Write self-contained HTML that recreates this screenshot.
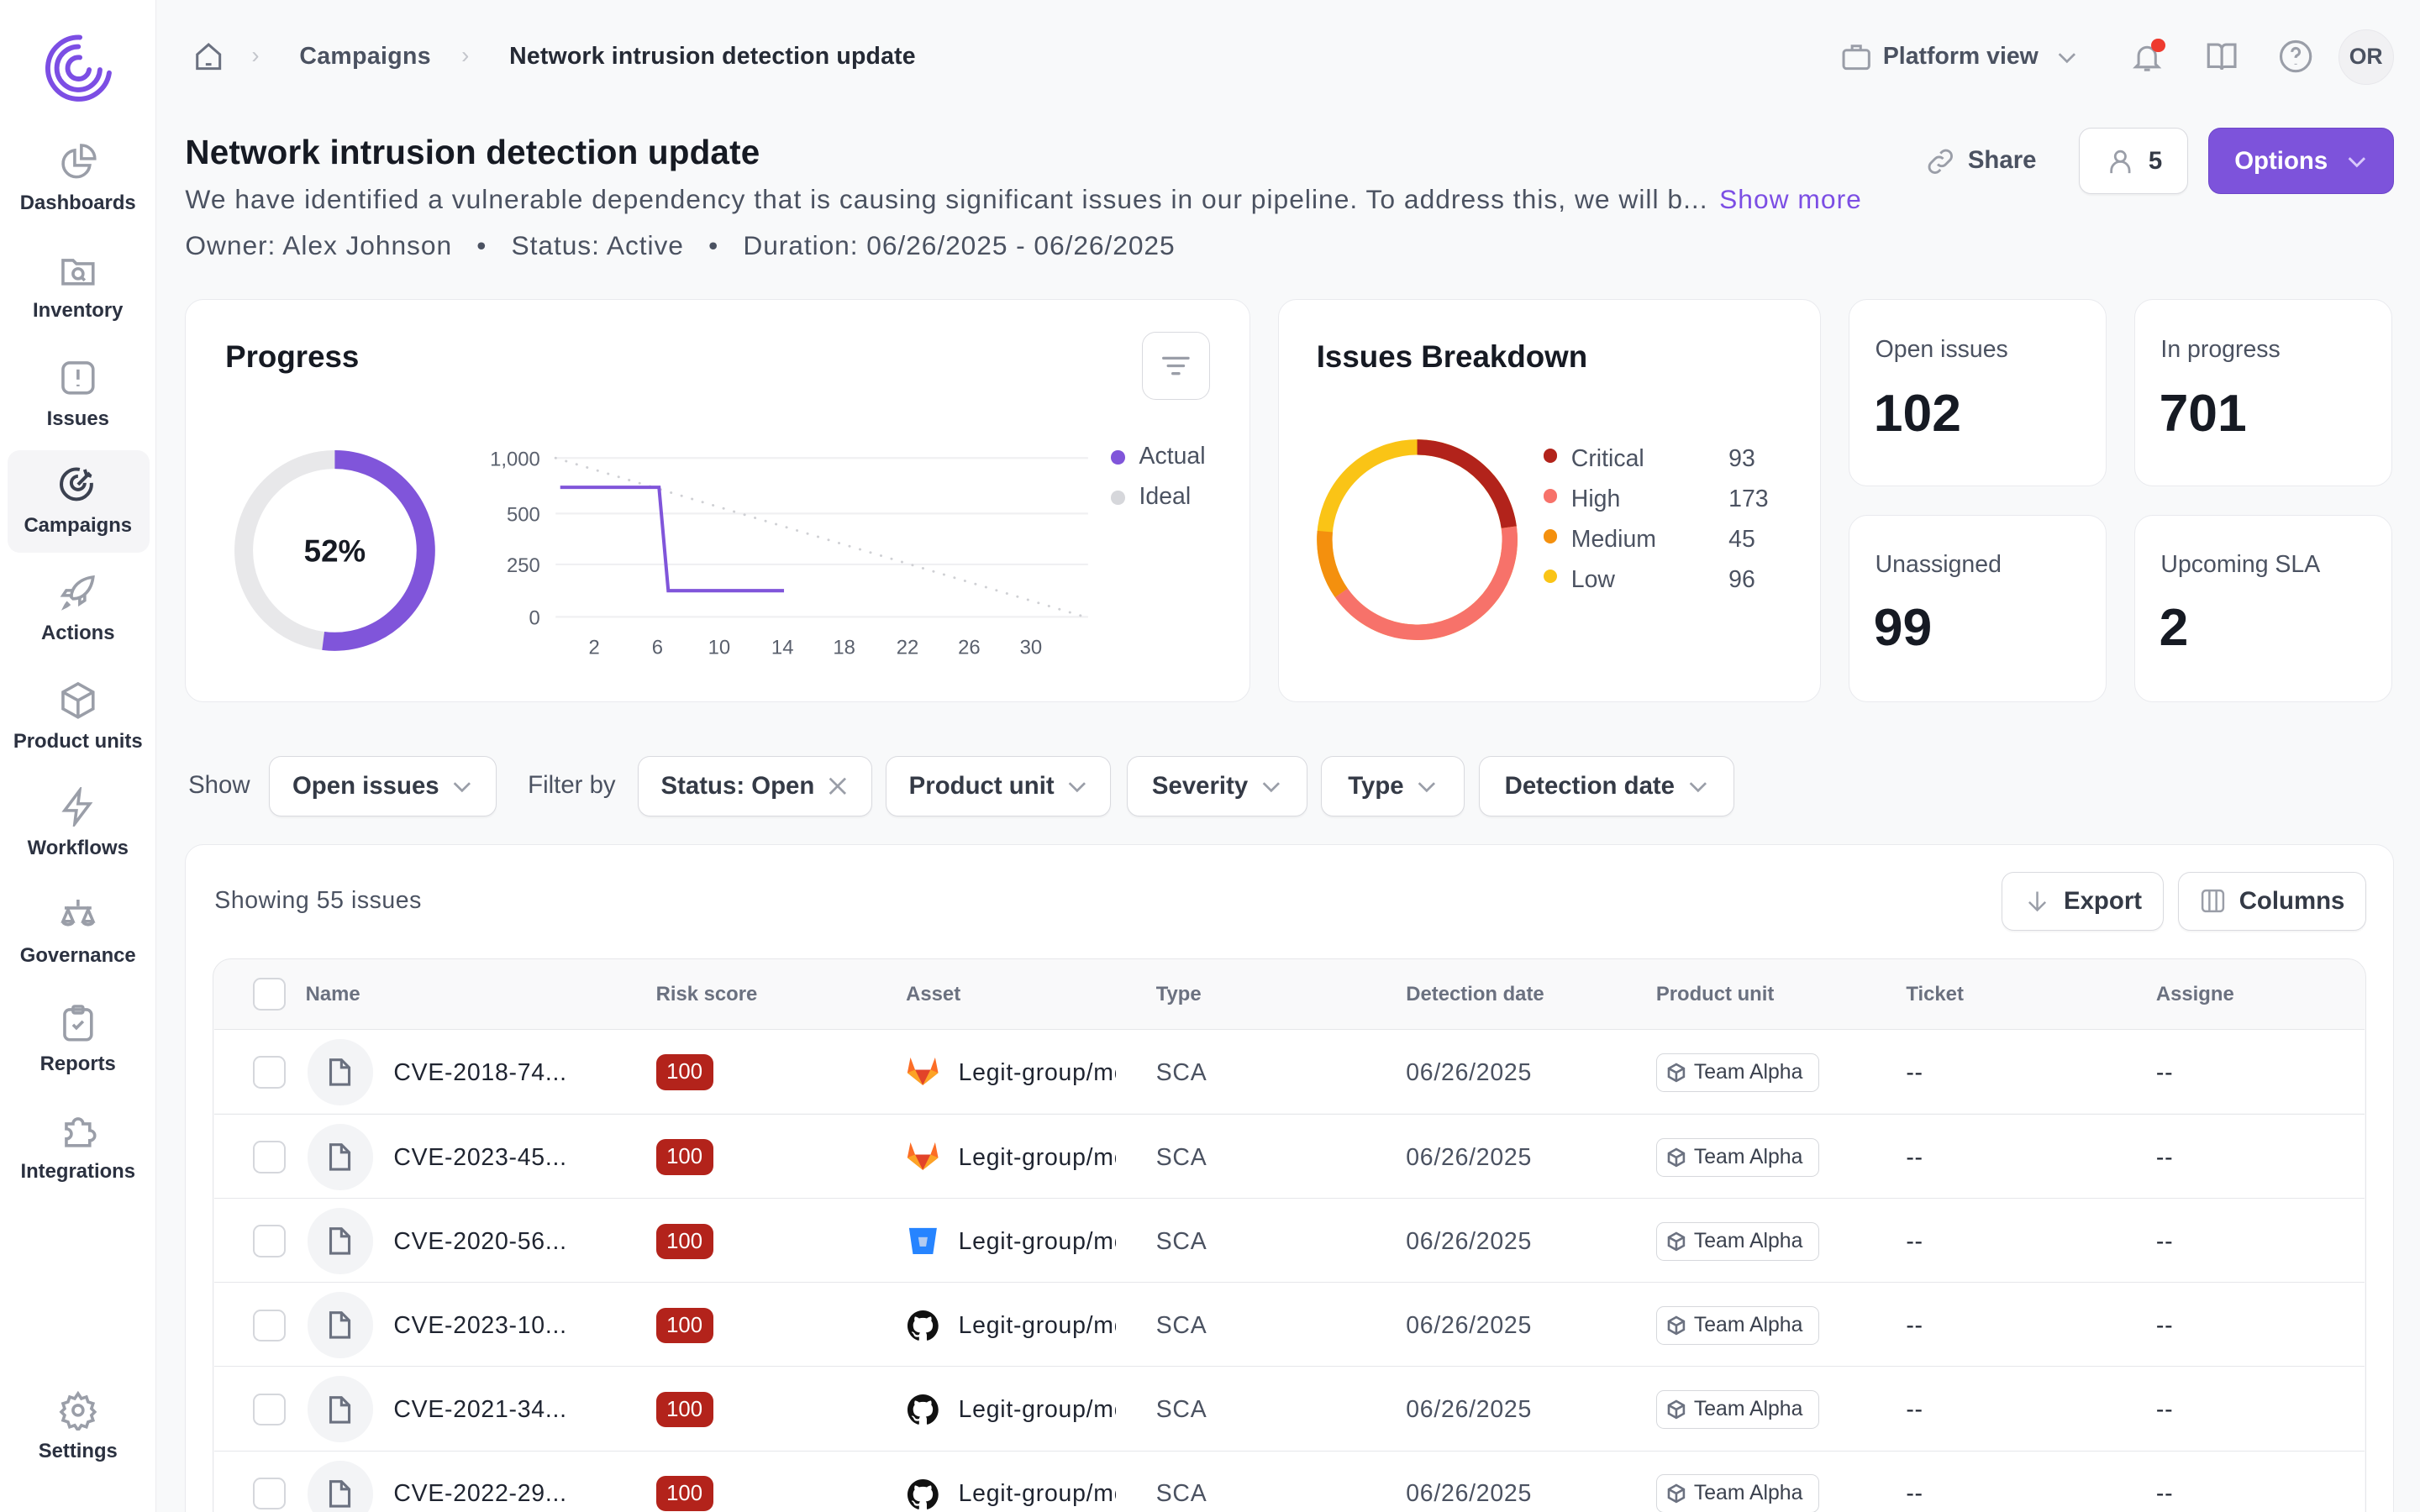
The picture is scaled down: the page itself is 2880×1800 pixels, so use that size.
<!DOCTYPE html>
<html><head><meta charset="utf-8">
<style>
*{box-sizing:border-box;margin:0;padding:0}
html,body{width:2880px;height:1800px;overflow:hidden;background:#f8f9fa}
#w{position:absolute;left:0;top:0;width:1568px;height:980px;zoom:1.836735;font-family:"Liberation Sans",sans-serif;color:#1f2430;background:#f8f9fa;overflow:hidden}
.a{position:absolute}
.side{left:0;top:0;width:101px;height:980px;background:#fff;border-right:1px solid #ececef}
.nav{position:absolute;left:0;width:101px;text-align:center;font-size:13px;font-weight:600;color:#2b3140}
.nav svg{display:block;margin:0 auto 6px}
.card{position:absolute;background:#fff;border:1px solid #e9eaee;border-radius:12px}
.btn{position:absolute;background:#fff;border:1px solid #d9dadf;border-radius:8px;font-size:16px;font-weight:600;color:#343a46;display:flex;align-items:center;justify-content:center;gap:8px;box-shadow:0 1px 1px rgba(0,0,0,.04)}
.g{color:#4b5261}
.th{position:absolute;top:637px;font-size:13px;font-weight:600;color:#6b7180}
.row{position:absolute;left:139px;width:1393px;height:54.5px;border-top:1px solid #e6e7ea;background:#fff}
.row>*{position:absolute}
.cb{width:21px;height:21px;border:1.5px solid #d5d7dc;border-radius:5px;background:#fff}
.fi{left:60px;top:6px;width:43px;height:43px;border-radius:50%;background:#f3f4f6;display:flex;align-items:center;justify-content:center}
.rs{left:286px;top:16px;width:37px;height:23px;border-radius:6px;background:#b3231b;color:#fff;font-size:14px;text-align:center;line-height:23px}
.tx{font-size:15.5px;top:19px;letter-spacing:.4px}
.tag{left:934px;top:15px;height:25px;padding:0 10px 0 6px;border:1px solid #d6d8dc;border-radius:5px;font-size:13.5px;color:#3a404d;display:flex;align-items:center;gap:5px;background:#fff}
</style></head><body><div id="w">

<div class="a side"></div>
<svg class="a" style="left:28px;top:21px" width="46" height="46" viewBox="0 0 46 46" fill="none" stroke="#7c4ee4" stroke-width="3.2" stroke-linecap="round">
<path d="M24 3A20 20 0 1 0 43 26"/><path d="M23 9A14 14 0 1 0 37 24"/><path d="M24 16A7 7 0 1 0 30 24"/></svg>
<div class="nav" style="top:92px"><svg width="26" height="26" viewBox="0 0 24 24" fill="none" stroke="#9a9ea8" stroke-width="1.8"><path d="M10 5a8 8 0 1 0 9 9h-9z"/><path d="M14 2v8h8a8 8 0 0 0-8-8z"/></svg>Dashboards</div>
<div class="nav" style="top:162px"><svg width="26" height="26" viewBox="0 0 24 24" fill="none" stroke="#9a9ea8" stroke-width="1.8"><path d="M3 6h6l2 2h10v12H3z"/><circle cx="12" cy="14" r="3"/><path d="M14 16l2 2"/></svg>Inventory</div>
<div class="nav" style="top:232px"><svg width="26" height="26" viewBox="0 0 24 24" fill="none" stroke="#9a9ea8" stroke-width="1.8"><rect x="3" y="3" width="18" height="18" rx="4"/><path d="M12 7v6M12 16v1"/></svg>Issues</div>
<div class="a" style="left:5px;top:292px;width:92px;height:66px;background:#f5f5f7;border-radius:8px"></div>
<div class="nav" style="top:301px"><svg width="26" height="26" viewBox="0 0 24 24" fill="none" stroke="#3b4150" stroke-width="2"><path d="M20 11A9 9 0 1 1 13 3"/><path d="M16 11a4 4 0 1 1-4-4"/><path d="M12 12l7-7M16 3l1 3 3 1"/></svg>Campaigns</div>
<div class="nav" style="top:371px"><svg width="26" height="26" viewBox="0 0 24 24" fill="none" stroke="#9a9ea8" stroke-width="1.8"><path d="M8 15c0-6 5-11 13-12-1 8-6 13-12 13z"/><path d="M9 11H5l-2 3h5M13 15v4l3-2v-4"/><path d="M6 18c-1 1-2 3-2 3s2-1 3-2"/></svg>Actions</div>
<div class="nav" style="top:441px"><svg width="26" height="26" viewBox="0 0 24 24" fill="none" stroke="#9a9ea8" stroke-width="1.8"><path d="M12 2l9 5v10l-9 5-9-5V7z"/><path d="M3 7l9 5 9-5M12 12v10"/></svg>Product units</div>
<div class="nav" style="top:510px"><svg width="26" height="26" viewBox="0 0 24 24" fill="none" stroke="#9a9ea8" stroke-width="1.8"><path d="M13 2L4 14h7l-1 8 9-12h-7z"/></svg>Workflows</div>
<div class="nav" style="top:580px"><svg width="26" height="26" viewBox="0 0 24 24" fill="none" stroke="#9a9ea8" stroke-width="1.8"><path d="M12 3v4M4 8h16M6 9l-3 7h6zM18 9l-3 7h6z"/><path d="M3 16a3 2 0 0 0 6 0M15 16a3 2 0 0 0 6 0"/></svg>Governance</div>
<div class="nav" style="top:650px"><svg width="26" height="26" viewBox="0 0 24 24" fill="none" stroke="#9a9ea8" stroke-width="1.8"><rect x="4" y="4" width="16" height="18" rx="3"/><rect x="9" y="2" width="6" height="4" rx="1"/><path d="M9 13l2 2 4-4"/></svg>Reports</div>
<div class="nav" style="top:720px"><svg width="26" height="26" viewBox="0 0 24 24" fill="none" stroke="#9a9ea8" stroke-width="1.8"><path d="M5 8h4a3 3 0 1 1 6 0h4v4a3 3 0 1 1 0 6v3H5v-4a3 3 0 1 0 0-6z"/></svg>Integrations</div>
<div class="nav" style="top:901px"><svg width="26" height="26" viewBox="0 0 24 24" fill="none" stroke="#9a9ea8" stroke-width="1.8"><circle cx="12" cy="12" r="3"/><path d="M12 2l2 3 3-1 1 3 3 1-1 3 2 2-2 2 1 3-3 1-1 3-3-1-2 3-2-3-3 1-1-3-3-1 1-3-2-2 2-2-1-3 3-1 1-3 3 1z"/></svg>Settings</div>

<svg class="a" style="left:124px;top:26px" width="22" height="22" viewBox="0 0 24 24" fill="none" stroke="#6b7180" stroke-width="1.8"><path d="M4 10l8-7 8 7v10H4z"/><path d="M10 17h4"/></svg>
<div class="a" style="left:163px;top:27px;color:#c4c6cc;font-size:15px">›</div>
<div class="a g" style="left:194px;top:28px;font-size:15.5px;font-weight:600;letter-spacing:.2px">Campaigns</div>
<div class="a" style="left:299px;top:27px;color:#c4c6cc;font-size:15px">›</div>
<div class="a" style="left:330px;top:28px;font-size:15.5px;font-weight:600;color:#252a35;letter-spacing:.1px">Network intrusion detection update</div>
<svg class="a" style="left:1192px;top:26px" width="22" height="22" viewBox="0 0 24 24" fill="none" stroke="#9a9ea8" stroke-width="1.8"><rect x="3" y="7" width="18" height="13" rx="2"/><path d="M9 7V4h6v3"/></svg>
<div class="a g" style="left:1220px;top:28px;font-size:15.5px;font-weight:600">Platform view</div>
<svg class="a" style="left:1332px;top:30px" width="14" height="14" viewBox="0 0 14 14" fill="none" stroke="#9a9ea8" stroke-width="1.5"><path d="M2 5l5 5 5-5"/></svg>
<svg class="a" style="left:1380px;top:25px" width="22" height="24" viewBox="0 0 24 24" fill="none" stroke="#9a9ea8" stroke-width="1.8"><path d="M6 17V11a6 6 0 0 1 12 0v6l2 2H4z"/><path d="M10 21h4"/></svg>
<div class="a" style="left:1394px;top:25px;width:9px;height:9px;border-radius:50%;background:#ee3b2f"></div>
<svg class="a" style="left:1428px;top:25px" width="23" height="23" viewBox="0 0 24 24" fill="none" stroke="#9a9ea8" stroke-width="1.8"><path d="M3 4h6a3 3 0 0 1 3 3v14a2 2 0 0 0-2-2H3zM21 4h-6a3 3 0 0 0-3 3v14a2 2 0 0 1 2-2h7z"/></svg>
<svg class="a" style="left:1476px;top:25px" width="23" height="23" viewBox="0 0 24 24" fill="none" stroke="#9a9ea8" stroke-width="1.8"><circle cx="12" cy="12" r="10"/><path d="M9.5 9a2.5 2.5 0 1 1 3.5 2.3c-.7.3-1 1-1 1.7M12 17v.5"/></svg>
<div class="a" style="left:1515px;top:19px;width:36px;height:36px;border-radius:50%;background:#f1f1f3;border:1px solid #e8e8ec;font-size:14.5px;font-weight:700;color:#4b5261;text-align:center;line-height:34px">OR</div>

<div class="a" style="left:120px;top:86px;font-size:22px;font-weight:600;color:#161a23;letter-spacing:.1px">Network intrusion detection update</div>
<div class="a g" style="left:120px;top:119px;font-size:17.3px;white-space:nowrap;letter-spacing:.55px">We have identified a vulnerable dependency that is causing significant issues in our pipeline. To address this, we will b... <span style="color:#7c4ee4;margin-left:2px">Show more</span></div>
<div class="a g" style="left:120px;top:149px;font-size:17.3px;white-space:nowrap;letter-spacing:.5px">Owner: Alex Johnson &nbsp;&nbsp;•&nbsp;&nbsp; Status: Active &nbsp;&nbsp;•&nbsp;&nbsp; Duration: 06/26/2025 - 06/26/2025</div>
<svg class="a" style="left:1247px;top:94px" width="21" height="21" viewBox="0 0 24 24" fill="none" stroke="#9a9ea8" stroke-width="1.8"><path d="M10 14a4 4 0 0 0 6 0l3-3a4 4 0 0 0-6-6l-1 1M14 10a4 4 0 0 0-6 0l-3 3a4 4 0 0 0 6 6l1-1"/></svg>
<div class="a g" style="left:1275px;top:95px;font-size:16px;font-weight:600">Share</div>
<div class="btn" style="left:1347px;top:83px;width:71px;height:43px"><svg width="20" height="20" viewBox="0 0 24 24" fill="none" stroke="#9a9ea8" stroke-width="1.8"><circle cx="12" cy="8" r="4"/><path d="M5 21v-2a7 7 0 0 1 14 0v2"/></svg>5</div>
<div class="a" style="left:1431px;top:83px;width:120px;height:43px;border-radius:8px;background:#7d53db;border:1px solid #6d46c9;color:#fff;font-size:16px;font-weight:600;display:flex;align-items:center;justify-content:center;gap:12px">Options <svg width="14" height="14" viewBox="0 0 14 14" fill="none" stroke="#d9c9fb" stroke-width="1.6"><path d="M2 5l5 5 5-5"/></svg></div>

<div class="card" style="left:120px;top:194px;width:690px;height:261px"></div>
<div class="a" style="left:146px;top:220px;font-size:20px;font-weight:600;color:#161a23">Progress</div>
<div class="a" style="left:740px;top:215px;width:44px;height:44px;border:1px solid #d9dadf;border-radius:9px;background:#fff"></div>
<svg class="a" style="left:752px;top:228px" width="20" height="18" viewBox="0 0 20 18" stroke="#9a9ea8" stroke-width="1.8" stroke-linecap="round"><path d="M2 4h16M5 9h10M8 14h4"/></svg>
<svg class="a" style="left:140px;top:280px" width="160" height="160" viewBox="0 0 160 160">
<circle cx="77" cy="77" r="59" fill="none" stroke="#e8e8ea" stroke-width="12"/>
<circle cx="77" cy="77" r="59" fill="none" stroke="#8055da" stroke-width="12" stroke-dasharray="192.8 400" transform="rotate(-90 77 77)"/>
<text x="77" y="84" text-anchor="middle" font-family="Liberation Sans" font-weight="700" font-size="20" fill="#161a23">52%</text></svg>
<svg class="a" style="left:300px;top:280px" width="420" height="160" viewBox="300 280 420 160" font-family="Liberation Sans" font-size="13" fill="#5a606d">
<g stroke="#f0f0f2" stroke-width="1.2"><path d="M360 297H705M360 333H705M360 366H705M360 400H705"/></g>
<text x="350" y="302" text-anchor="end">1,000</text><text x="350" y="338" text-anchor="end">500</text><text x="350" y="371" text-anchor="end">250</text><text x="350" y="405" text-anchor="end">0</text>
<path d="M360 297L703 400" stroke="#cfd0d4" stroke-width="1.6" stroke-dasharray="0.1 7" stroke-linecap="round"/>
<path d="M363 316H427L433 383H508" fill="none" stroke="#8055da" stroke-width="2.2"/>
<g text-anchor="middle"><text x="385" y="424">2</text><text x="426" y="424">6</text><text x="466" y="424">10</text><text x="507" y="424">14</text><text x="547" y="424">18</text><text x="588" y="424">22</text><text x="628" y="424">26</text><text x="668" y="424">30</text></g>
</svg>
<div class="a" style="left:720px;top:292px;width:9px;height:9px;border-radius:50%;background:#8055da"></div>
<div class="a g" style="left:738px;top:287px;font-size:15.5px">Actual</div>
<div class="a" style="left:720px;top:318px;width:9px;height:9px;border-radius:50%;background:#d6d7db"></div>
<div class="a g" style="left:738px;top:313px;font-size:15.5px">Ideal</div>

<div class="card" style="left:828px;top:194px;width:352px;height:261px"></div>
<div class="a" style="left:853px;top:220px;font-size:20px;font-weight:600;color:#161a23">Issues Breakdown</div>
<svg class="a" style="left:848px;top:280px" width="140" height="140" viewBox="0 0 140 140">
<g fill="none" stroke-width="10" transform="rotate(-90 70 70)">
<circle cx="70" cy="70" r="60" stroke="#fac416"/>
<circle cx="70" cy="70" r="60" stroke="#b2231b" stroke-dasharray="86 400"/>
<circle cx="70" cy="70" r="60" stroke="#f7726a" stroke-dasharray="160 400" stroke-dashoffset="-86"/>
<circle cx="70" cy="70" r="60" stroke="#f4900e" stroke-dasharray="42 400" stroke-dashoffset="-246"/>
</g></svg>
<div class="a" style="left:1000px;top:291px;width:9px;height:9px;border-radius:50%;background:#b2231b"></div>
<div class="a" style="left:1000px;top:317px;width:9px;height:9px;border-radius:50%;background:#f7726a"></div>
<div class="a" style="left:1000px;top:343px;width:9px;height:9px;border-radius:50%;background:#f4900e"></div>
<div class="a" style="left:1000px;top:369px;width:9px;height:9px;border-radius:50%;background:#fac416"></div>
<div class="a g" style="left:1018px;top:285px;font-size:15.5px;line-height:26px">Critical<br>High<br>Medium<br>Low</div>
<div class="a g" style="left:1120px;top:285px;font-size:15.5px;line-height:26px">93<br>173<br>45<br>96</div>

<div class="card" style="left:1198px;top:194px;width:167px;height:121px"></div>
<div class="card" style="left:1383px;top:194px;width:167px;height:121px"></div>
<div class="card" style="left:1198px;top:334px;width:167px;height:121px"></div>
<div class="card" style="left:1383px;top:334px;width:167px;height:121px"></div>
<div class="a g" style="left:1215px;top:218px;font-size:15.5px">Open issues</div>
<div class="a" style="left:1214px;top:248px;font-size:34px;font-weight:600;color:#161a23">102</div>
<div class="a g" style="left:1400px;top:218px;font-size:15.5px">In progress</div>
<div class="a" style="left:1399px;top:248px;font-size:34px;font-weight:600;color:#161a23">701</div>
<div class="a g" style="left:1215px;top:357px;font-size:15.5px">Unassigned</div>
<div class="a" style="left:1214px;top:387px;font-size:34px;font-weight:600;color:#161a23">99</div>
<div class="a g" style="left:1400px;top:357px;font-size:15.5px">Upcoming SLA</div>
<div class="a" style="left:1399px;top:387px;font-size:34px;font-weight:600;color:#161a23">2</div>

<div class="a g" style="left:122px;top:500px;font-size:16px">Show</div>
<div class="btn" style="left:174px;top:490px;width:148px;height:39px">Open issues <svg width="14" height="14" viewBox="0 0 14 14" fill="none" stroke="#9a9ea8" stroke-width="1.5"><path d="M2 5l5 5 5-5"/></svg></div>
<div class="a g" style="left:342px;top:500px;font-size:16px">Filter by</div>
<div class="btn" style="left:413px;top:490px;width:152px;height:39px">Status: Open <svg width="14" height="14" viewBox="0 0 14 14" fill="none" stroke="#9a9ea8" stroke-width="1.5"><path d="M2 2l10 10M12 2L2 12"/></svg></div>
<div class="btn" style="left:574px;top:490px;width:146px;height:39px">Product unit <svg width="14" height="14" viewBox="0 0 14 14" fill="none" stroke="#9a9ea8" stroke-width="1.5"><path d="M2 5l5 5 5-5"/></svg></div>
<div class="btn" style="left:730px;top:490px;width:117px;height:39px">Severity <svg width="14" height="14" viewBox="0 0 14 14" fill="none" stroke="#9a9ea8" stroke-width="1.5"><path d="M2 5l5 5 5-5"/></svg></div>
<div class="btn" style="left:856px;top:490px;width:93px;height:39px">Type <svg width="14" height="14" viewBox="0 0 14 14" fill="none" stroke="#9a9ea8" stroke-width="1.5"><path d="M2 5l5 5 5-5"/></svg></div>
<div class="btn" style="left:958px;top:490px;width:166px;height:39px">Detection date <svg width="14" height="14" viewBox="0 0 14 14" fill="none" stroke="#9a9ea8" stroke-width="1.5"><path d="M2 5l5 5 5-5"/></svg></div>

<div class="card" style="left:120px;top:547px;width:1431px;height:460px"></div>
<div class="a g" style="left:139px;top:575px;font-size:15.5px;letter-spacing:.3px">Showing 55 issues</div>
<div class="btn" style="left:1297px;top:565px;width:105px;height:38px"><svg width="18" height="18" viewBox="0 0 24 24" fill="none" stroke="#9a9ea8" stroke-width="1.8"><path d="M12 4v16M5 13l7 7 7-7"/></svg>Export</div>
<div class="btn" style="left:1411px;top:565px;width:122px;height:38px"><svg width="18" height="18" viewBox="0 0 24 24" fill="none" stroke="#9a9ea8" stroke-width="1.8"><rect x="3" y="3" width="18" height="18" rx="3"/><path d="M9 3v18M15 3v18"/></svg>Columns</div>
<div class="a" style="left:138px;top:621px;width:1395px;height:380px;border:1px solid #e6e7ea;border-radius:12px;background:#f9f9fa"></div>
<div class="a cb" style="left:164px;top:634px"></div>
<div class="th" style="left:198px">Name</div><div class="th" style="left:425px">Risk score</div><div class="th" style="left:587px">Asset</div><div class="th" style="left:749px">Type</div><div class="th" style="left:911px">Detection date</div><div class="th" style="left:1073px">Product unit</div><div class="th" style="left:1235px">Ticket</div><div class="th" style="left:1397px">Assigne</div>

<div class="row" style="top:667px"><div class="cb" style="left:25px;top:17px"></div><div class="fi"><svg width="18" height="20" viewBox="0 0 18 20" fill="none" stroke="#6b7180" stroke-width="1.7"><path d="M3 2h7l5 5v11H3z M10 2v5h5"/></svg></div><div class="tx" style="left:116px">CVE-2018-74...</div><div class="rs">100</div>
<svg style="left:448px;top:17px" width="22" height="20" viewBox="0 0 22 20"><path d="M11 19L1 11l2-10 3 8h10l3-8 2 10z" fill="#fc6d26"/><path d="M11 19L6 9h10z" fill="#e24329"/><path d="M1 11l5-2 5 10z M21 11l-5-2-5 10z" fill="#fca326"/></svg>
<div class="tx" style="left:482px;width:102px;overflow:hidden;white-space:nowrap">Legit-group/monorepo</div><div class="tx g" style="left:610px">SCA</div><div class="tx g" style="left:772px">06/26/2025</div>
<div class="tag"><svg width="13" height="13" viewBox="0 0 24 24" fill="none" stroke="#6b7180" stroke-width="2.6"><path d="M12 2l9 5v10l-9 5-9-5V7z M3 7l9 5 9-5M12 12v10"/></svg>Team Alpha</div><div class="tx" style="left:1096px">--</div><div class="tx" style="left:1258px">--</div></div>

<div class="row" style="top:722px"><div class="cb" style="left:25px;top:17px"></div><div class="fi"><svg width="18" height="20" viewBox="0 0 18 20" fill="none" stroke="#6b7180" stroke-width="1.7"><path d="M3 2h7l5 5v11H3z M10 2v5h5"/></svg></div><div class="tx" style="left:116px">CVE-2023-45...</div><div class="rs">100</div>
<svg style="left:448px;top:17px" width="22" height="20" viewBox="0 0 22 20"><path d="M11 19L1 11l2-10 3 8h10l3-8 2 10z" fill="#fc6d26"/><path d="M11 19L6 9h10z" fill="#e24329"/><path d="M1 11l5-2 5 10z M21 11l-5-2-5 10z" fill="#fca326"/></svg>
<div class="tx" style="left:482px;width:102px;overflow:hidden;white-space:nowrap">Legit-group/monorepo</div><div class="tx g" style="left:610px">SCA</div><div class="tx g" style="left:772px">06/26/2025</div>
<div class="tag"><svg width="13" height="13" viewBox="0 0 24 24" fill="none" stroke="#6b7180" stroke-width="2.6"><path d="M12 2l9 5v10l-9 5-9-5V7z M3 7l9 5 9-5M12 12v10"/></svg>Team Alpha</div><div class="tx" style="left:1096px">--</div><div class="tx" style="left:1258px">--</div></div>

<div class="row" style="top:776.5px"><div class="cb" style="left:25px;top:17px"></div><div class="fi"><svg width="18" height="20" viewBox="0 0 18 20" fill="none" stroke="#6b7180" stroke-width="1.7"><path d="M3 2h7l5 5v11H3z M10 2v5h5"/></svg></div><div class="tx" style="left:116px">CVE-2020-56...</div><div class="rs">100</div>
<svg style="left:449px;top:18px" width="20" height="19" viewBox="0 0 20 19"><path d="M1 1h18l-2.5 17h-13z" fill="#2684ff"/><path d="M7 7h6l-1 6H8z" fill="#fff"/><path d="M7 7h6l-1 6H8z" fill="#0052cc" opacity=".3"/></svg>
<div class="tx" style="left:482px;width:102px;overflow:hidden;white-space:nowrap">Legit-group/monorepo</div><div class="tx g" style="left:610px">SCA</div><div class="tx g" style="left:772px">06/26/2025</div>
<div class="tag"><svg width="13" height="13" viewBox="0 0 24 24" fill="none" stroke="#6b7180" stroke-width="2.6"><path d="M12 2l9 5v10l-9 5-9-5V7z M3 7l9 5 9-5M12 12v10"/></svg>Team Alpha</div><div class="tx" style="left:1096px">--</div><div class="tx" style="left:1258px">--</div></div>

<div class="row" style="top:831px"><div class="cb" style="left:25px;top:17px"></div><div class="fi"><svg width="18" height="20" viewBox="0 0 18 20" fill="none" stroke="#6b7180" stroke-width="1.7"><path d="M3 2h7l5 5v11H3z M10 2v5h5"/></svg></div><div class="tx" style="left:116px">CVE-2023-10...</div><div class="rs">100</div>
<svg style="left:449px;top:18px" width="20" height="20" viewBox="0 0 16 16"><path fill="#111" d="M8 0C3.58 0 0 3.58 0 8c0 3.54 2.29 6.53 5.47 7.59.4.07.55-.17.55-.38 0-.19-.01-.82-.01-1.49-2.01.37-2.53-.49-2.69-.94-.09-.23-.48-.94-.82-1.13-.28-.15-.68-.52-.01-.53.63-.01 1.08.58 1.23.82.72 1.21 1.87.87 2.33.66.07-.52.28-.87.51-1.07-1.78-.2-3.64-.89-3.64-3.950 0-.87.31-1.59.82-2.15-.08-.2-.36-1.02.08-2.12 0 0 .67-.21 2.2.82.64-.18 1.32-.27 2-.27.68 0 1.36.09 2 .27 1.53-1.04 2.2-.82 2.2-.82.44 1.1.16 1.92.08 2.12.51.56.82 1.27.82 2.15 0 3.07-1.87 3.75-3.65 3.95.29.25.54.73.54 1.48 0 1.07-.01 1.93-.01 2.2 0 .21.15.46.55.38A8.013 8.013 0 0016 8c0-4.42-3.58-8-8-8z"/></svg>
<div class="tx" style="left:482px;width:102px;overflow:hidden;white-space:nowrap">Legit-group/monorepo</div><div class="tx g" style="left:610px">SCA</div><div class="tx g" style="left:772px">06/26/2025</div>
<div class="tag"><svg width="13" height="13" viewBox="0 0 24 24" fill="none" stroke="#6b7180" stroke-width="2.6"><path d="M12 2l9 5v10l-9 5-9-5V7z M3 7l9 5 9-5M12 12v10"/></svg>Team Alpha</div><div class="tx" style="left:1096px">--</div><div class="tx" style="left:1258px">--</div></div>

<div class="row" style="top:885.5px"><div class="cb" style="left:25px;top:17px"></div><div class="fi"><svg width="18" height="20" viewBox="0 0 18 20" fill="none" stroke="#6b7180" stroke-width="1.7"><path d="M3 2h7l5 5v11H3z M10 2v5h5"/></svg></div><div class="tx" style="left:116px">CVE-2021-34...</div><div class="rs">100</div>
<svg style="left:449px;top:18px" width="20" height="20" viewBox="0 0 16 16"><path fill="#111" d="M8 0C3.58 0 0 3.58 0 8c0 3.54 2.29 6.53 5.47 7.59.4.07.55-.17.55-.38 0-.19-.01-.82-.01-1.49-2.01.37-2.53-.49-2.69-.94-.09-.23-.48-.94-.82-1.13-.28-.15-.68-.52-.01-.53.63-.01 1.08.58 1.23.82.72 1.21 1.87.87 2.33.66.07-.52.28-.87.51-1.07-1.78-.2-3.64-.89-3.64-3.95 0-.87.31-1.59.82-2.15-.08-.2-.36-1.02.08-2.12 0 0 .67-.21 2.2.82.64-.18 1.32-.27 2-.27.68 0 1.36.09 2 .27 1.53-1.04 2.2-.82 2.2-.82.44 1.1.16 1.92.08 2.12.51.56.82 1.27.82 2.15 0 3.07-1.87 3.75-3.65 3.95.29.25.54.73.54 1.48 0 1.07-.01 1.93-.01 2.2 0 .21.15.46.55.38A8.013 8.013 0 0016 8c0-4.42-3.58-8-8-8z"/></svg>
<div class="tx" style="left:482px;width:102px;overflow:hidden;white-space:nowrap">Legit-group/monorepo</div><div class="tx g" style="left:610px">SCA</div><div class="tx g" style="left:772px">06/26/2025</div>
<div class="tag"><svg width="13" height="13" viewBox="0 0 24 24" fill="none" stroke="#6b7180" stroke-width="2.6"><path d="M12 2l9 5v10l-9 5-9-5V7z M3 7l9 5 9-5M12 12v10"/></svg>Team Alpha</div><div class="tx" style="left:1096px">--</div><div class="tx" style="left:1258px">--</div></div>

<div class="row" style="top:940px"><div class="cb" style="left:25px;top:17px"></div><div class="fi"><svg width="18" height="20" viewBox="0 0 18 20" fill="none" stroke="#6b7180" stroke-width="1.7"><path d="M3 2h7l5 5v11H3z M10 2v5h5"/></svg></div><div class="tx" style="left:116px">CVE-2022-29...</div><div class="rs">100</div>
<svg style="left:449px;top:18px" width="20" height="20" viewBox="0 0 16 16"><path fill="#111" d="M8 0C3.58 0 0 3.58 0 8c0 3.54 2.29 6.53 5.47 7.59.4.07.55-.17.55-.38 0-.19-.01-.82-.01-1.49-2.01.37-2.53-.49-2.69-.94-.09-.23-.48-.94-.82-1.13-.28-.15-.68-.52-.01-.53.63-.01 1.08.58 1.23.82.72 1.21 1.87.87 2.33.66.07-.52.28-.87.51-1.07-1.78-.2-3.64-.89-3.64-3.95 0-.87.31-1.59.82-2.15-.08-.2-.36-1.02.08-2.12 0 0 .67-.21 2.2.82.64-.18 1.32-.27 2-.27.68 0 1.36.09 2 .27 1.53-1.04 2.2-.82 2.2-.82.44 1.1.16 1.92.08 2.12.51.56.82 1.27.82 2.15 0 3.07-1.87 3.75-3.65 3.95.29.25.54.73.54 1.48 0 1.07-.01 1.93-.01 2.2 0 .21.15.46.55.38A8.013 8.013 0 0016 8c0-4.42-3.58-8-8-8z"/></svg>
<div class="tx" style="left:482px;width:102px;overflow:hidden;white-space:nowrap">Legit-group/monorepo</div><div class="tx g" style="left:610px">SCA</div><div class="tx g" style="left:772px">06/26/2025</div>
<div class="tag"><svg width="13" height="13" viewBox="0 0 24 24" fill="none" stroke="#6b7180" stroke-width="2.6"><path d="M12 2l9 5v10l-9 5-9-5V7z M3 7l9 5 9-5M12 12v10"/></svg>Team Alpha</div><div class="tx" style="left:1096px">--</div><div class="tx" style="left:1258px">--</div></div>

</div></body></html>
